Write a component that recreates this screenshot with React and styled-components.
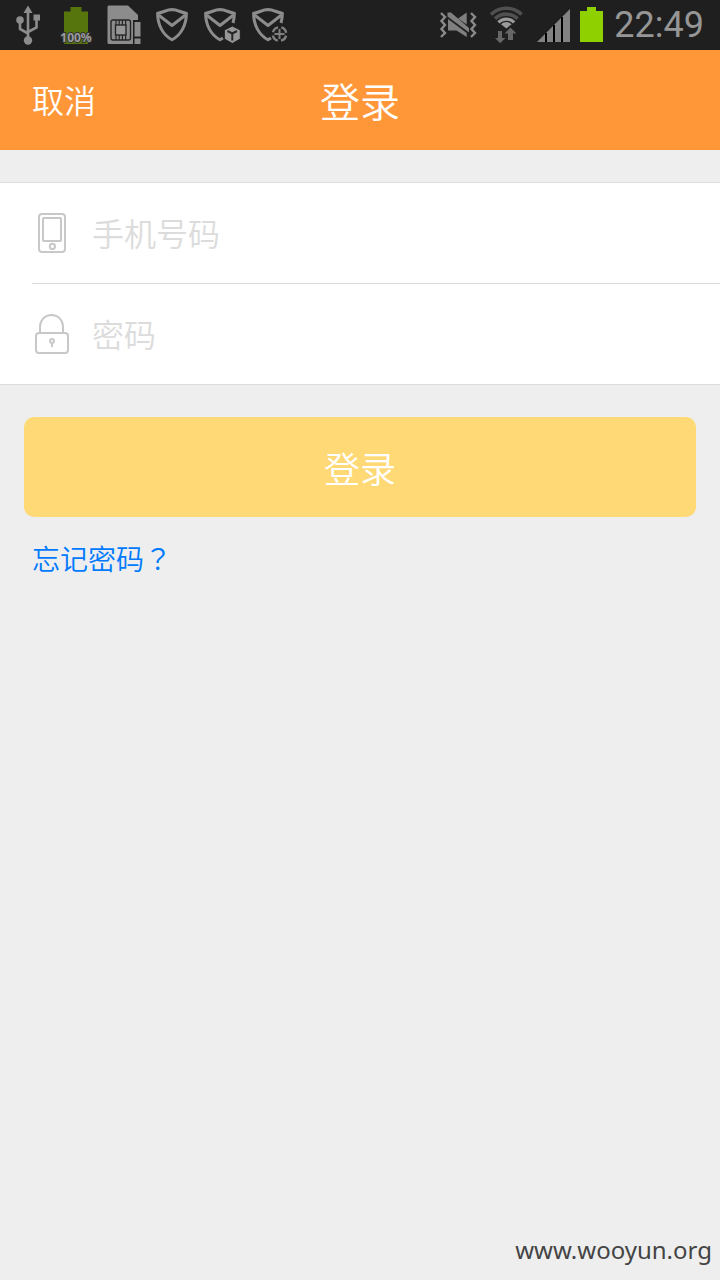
/** 패키지 참조 */
import React, { memo, useCallback, useState } from 'react';
import styled, { createGlobalStyle } from 'styled-components';

/** 상태바 아이콘 */
const ShieldShape = ({ open }) => (
  <g fill="none" stroke="#8c8c8c" strokeLinejoin="round">
    <path
      strokeWidth="3"
      d={open
        ? 'M27 38L24 39.8C15 35 9.6 25 9.6 13.2C15 12.6 18 9.8 24 9.6C30 9.8 33 12.6 38.4 13.2C38.3 17 37.8 20 37 23'
        : 'M24 39.8C15 35 9.6 25 9.6 13.2C15 12.6 18 9.8 24 9.6C30 9.8 33 12.6 38.4 13.2C38.4 25 33 35 24 39.8Z'}
    />
    <path strokeWidth="3" d="M10.5 15L24 25.5L37.5 15" />
  </g>
);

const UsbIcon = () => (
  <StatusIcon viewBox="0 0 48 50" aria-hidden="true">
    <g fill="#8c8c8c">
      <path d="M24 5.5L28.5 13H19.5Z" />
      <circle cx="16" cy="20" r="3.8" />
      <rect x="29.5" y="14.5" width="6.5" height="6" />
      <circle cx="24" cy="40.5" r="4.2" />
    </g>
    <path d="M24 12V38M16 22V29L24 33.5M32.5 20V27.5L24 32" fill="none" stroke="#8c8c8c" strokeWidth="2.6" />
  </StatusIcon>
);

const ChargeIcon = () => (
  <StatusIcon viewBox="0 0 48 50" aria-hidden="true">
    <path d="M12 11.5H18.5V7H29.5V11.5H36V44H12Z" fill="#56760d" />
    <text
      x="24" y="42" textAnchor="middle" fill="#9c9c9c" stroke="#333" strokeWidth="2" paintOrder="stroke"
      fontFamily="'Noto Sans', sans-serif" fontSize="12" fontWeight="700"
    >
      100%
    </text>
  </StatusIcon>
);

const SimIcon = () => (
  <StatusIcon viewBox="0 0 48 50" aria-hidden="true">
    <path d="M9 5.5H28L38 15V44H9Q7.5 44 7.5 42.5V7Q7.5 5.5 9 5.5Z" fill="#8c8c8c" />
    <rect x="11" y="20" width="19.5" height="20" rx="2" fill="none" stroke="#262626" strokeWidth="1.4" />
    <path d="M16 20V25M19.2 20V25M22.4 20V25M25.6 20V25M16 35V40M19.2 35V40M22.4 35V40M25.6 35V40" stroke="#262626" strokeWidth="1.2" />
    <rect x="15.5" y="25" width="10.5" height="10" fill="#969696" stroke="#262626" strokeWidth="1.4" />
    <path d="M33 20H42V46H33Z" fill="#1f1f1f" />
    <path d="M34.5 22H40.5V36.5H34.5ZM34.5 38.5H40.5V44H34.5Z" fill="#8c8c8c" />
  </StatusIcon>
);

const ShieldIcon = () => (
  <StatusIcon viewBox="0 0 48 50" aria-hidden="true">
    <ShieldShape />
  </StatusIcon>
);

const ShieldBoxIcon = () => (
  <StatusIcon viewBox="0 0 48 50" aria-hidden="true">
    <ShieldShape open />
    <path d="M36.3 26L44.3 30V39L36.3 43.5L28.3 39V30Z" fill="#969696" stroke="#1f1f1f" strokeWidth="1" />
    <path d="M31.5 31L36.3 33.5L41 31M36.3 33.5V40.5" fill="none" stroke="#262626" strokeWidth="2" />
  </StatusIcon>
);

const ShieldTargetIcon = () => (
  <StatusIcon viewBox="0 0 48 50" aria-hidden="true">
    <ShieldShape open />
    <circle cx="35.5" cy="34" r="9" fill="#1f1f1f" />
    <g fill="none" stroke="#808080" strokeWidth="2.4">
      <circle cx="35.5" cy="34" r="6.8" strokeDasharray="7.4 3.28" strokeDashoffset="-1.64" />
      <path d="M35.5 29V39M30.5 34H40.5" strokeWidth="2" />
    </g>
  </StatusIcon>
);

const MuteIcon = () => (
  <StatusIcon viewBox="0 0 48 50" aria-hidden="true">
    <g fill="none" stroke="#8a8a8a" strokeWidth="2.4">
      <path d="M7 13L11 17L7.5 21L11 25L7.5 29L11 33L7 37" />
      <path d="M37 13L41 17L37.5 21L41 25L37.5 29L41 33L37 37" />
    </g>
    <g fill="#808080">
      <path d="M24 18.5L32.7 12.5V24.5Z" />
      <path d="M13.5 12.5H17L35 28V32.5L13.5 16.5Z" />
      <path d="M14 19L32.7 33V37L22.5 30.5H14Z" />
    </g>
  </StatusIcon>
);

const WifiIcon = () => (
  <StatusIcon viewBox="0 0 48 50" aria-hidden="true">
    <g fill="none" strokeWidth="3.6">
      <path d="M9 14.6A21.5 21.5 0 0 1 39.6 14.6" stroke="#505050" />
      <path d="M13 18.8A16 16 0 0 1 35.6 18.8" stroke="#505050" />
      <path d="M16.4 22.4A11 11 0 0 1 32.2 22.4" stroke="#9a9a9a" strokeWidth="3.2" />
    </g>
    <path d="M24.3 28.5L19 24.2A7.4 7.4 0 0 1 29.6 24.2Z" fill="#9a9a9a" />
    <path d="M16 31H20V38H23.5L18.2 43.2L13 38H16ZM26 40V33.5H22.5L28.5 27.5L34.5 33.5H31V40Z" fill="#666" />
  </StatusIcon>
);

const SignalIcon = () => (
  <StatusIcon viewBox="0 0 48 50" aria-hidden="true">
    <path d="M7 42L40 9V42Z" fill="#828282" />
    <path d="M16 33V42M24 25V42M32 17V42" stroke="#000" strokeWidth="2" />
  </StatusIcon>
);

/** 입력창 아이콘 */
const PhoneIcon = () => (
  <FieldIcon viewBox="0 0 40 42" aria-hidden="true">
    <rect x="7" y="2" width="26" height="38" rx="3" />
    <rect x="11" y="6" width="18" height="23" rx="1" />
    <circle cx="20.4" cy="34.4" r="2.6" />
  </FieldIcon>
);

const LockIcon = () => (
  <FieldIcon viewBox="0 0 40 42" aria-hidden="true">
    <path d="M8 20V13.5A11.5 11.5 0 0 1 31 13.5V20" />
    <rect x="4" y="20" width="32" height="20" rx="3" />
    <circle cx="20" cy="28" r="2" />
    <path d="M20 30V34" />
  </FieldIcon>
);

const StatusBar = memo(() => (
  <StatusContainer>
    <StatusGroup>
      <UsbIcon />
      <ChargeIcon />
      <SimIcon />
      <ShieldIcon />
      <ShieldBoxIcon />
      <ShieldTargetIcon />
    </StatusGroup>
    <StatusGroup>
      <MuteIcon />
      <WifiIcon />
      <SignalIcon />
      <BatteryIcon viewBox="0 0 26 50" aria-hidden="true">
        <path d="M2 11H9V7H18V11H25V42H2Z" fill="#8fd000" />
      </BatteryIcon>
      <Clock>22:49</Clock>
    </StatusGroup>
  </StatusContainer>
));

const App = () => {
  // 입력값 상태값
  const [form, setForm] = useState({ phone: '', password: '' });

  const onChange = useCallback(e => {
    const { name, value } = e.target;

    setForm(prev => ({ ...prev, [name]: value }));
  }, []);

  const onSubmit = useCallback(e => {
    e.preventDefault();
  }, []);

  return (
    <>
      <GlobalStyle />
      <Page>
        <StatusBar />
        <Header>
          <CancelBtn type="button">取消</CancelBtn>
          <Title>登录</Title>
        </Header>

        <form onSubmit={onSubmit}>
          <FieldList>
            <Field>
              <PhoneIcon />
              <FieldInput
                type="tel" name="phone" placeholder="手机号码" aria-label="手机号码"
                value={form.phone} onChange={onChange}
              />
            </Field>
            <Field $divider>
              <LockIcon />
              <FieldInput
                type="password" name="password" placeholder="密码" aria-label="密码"
                value={form.password} onChange={onChange}
              />
            </Field>
          </FieldList>
          <SubmitBtn type="submit">登录</SubmitBtn>
        </form>

        <ForgotLink href="#forgot">忘记密码<WideMark>？</WideMark></ForgotLink>
        <SiteMark>www.wooyun.org</SiteMark>
      </Page>
    </>
  );
};

export default App;

const GlobalStyle = createGlobalStyle`
  * { box-sizing: border-box; }

  body {
    margin: 0;
    background: #eee;
    font-family: Roboto, 'Noto Sans CJK SC', sans-serif;
    font-weight: 350;
  }

  button, input {
    font-family: inherit;
    font-weight: inherit;
  }
`;

const Page = styled.div`
  display: flex;
  flex-direction: column;
  min-height: 100vh;
`;

const StatusContainer = styled.div`
  display: flex;
  justify-content: space-between;
  height: 50px;
  padding: 0 16px 0 4px;
  background: #1f1f1f;
`;

const StatusGroup = styled.div`
  display: flex;
  align-items: center;
`;

const StatusIcon = styled.svg`
  display: block;
  width: 48px;
  height: 50px;
`;

const BatteryIcon = styled(StatusIcon)`
  width: 26px;
`;

const Clock = styled.span`
  margin-left: 10px;
  color: #969696;
  font-size: 36px;
  font-weight: 400;
  line-height: 50px;
`;

const Header = styled.header`
  display: grid;
  grid-template-columns: 1fr auto 1fr;
  align-items: center;
  height: 100px;
  padding: 4px 32px 0;
  background: #ff9739;
  color: #fff;
`;

const CancelBtn = styled.button`
  justify-self: start;
  padding: 0;
  border: 0;
  background: none;
  color: inherit;
  font-size: 32px;
  line-height: 48px;
  cursor: pointer;
`;

const Title = styled.h1`
  margin: 0;
  padding-top: 4px;
  font-size: 40px;
  font-weight: inherit;
  line-height: 60px;
`;

const FieldList = styled.div`
  margin-top: 32px;
  padding-left: 32px;
  border: solid #dcdcdc;
  border-width: 1px 0;
  background: #fff;
`;

const Field = styled.label`
  display: flex;
  align-items: center;
  gap: 20px;
  border-top: ${({ $divider }) => ($divider ? '1px solid #dcdcdc' : '0')};
`;

const FieldIcon = styled.svg`
  flex: none;
  width: 40px;
  height: 42px;
  fill: none;
  stroke: #c8c8c8;
  stroke-width: 2;
`;

const FieldInput = styled.input`
  flex: 1;
  min-width: 0;
  height: 100px;
  padding: 4px 0 0;
  border: 0;
  outline: 0;
  background: none;
  color: #333;
  font-size: 32px;

  &::placeholder { color: #dcdcdc; opacity: 1; }
`;

const SubmitBtn = styled.button`
  display: block;
  width: calc(100% - 48px);
  height: 100px;
  margin: 32px 24px 0;
  padding: 0;
  border: 0;
  border-radius: 10px;
  background: #ffd975;
  color: #fff;
  font-size: 36px;
  cursor: pointer;
`;

const ForgotLink = styled.a`
  align-self: flex-start;
  margin: 20px 32px 0;
  color: #007aff;
  font-size: 28px;
  line-height: 42px;
  text-decoration: none;
`;

const WideMark = styled.span`
  font-family: 'Noto Sans CJK TC', sans-serif;
`;

const SiteMark = styled.footer`
  margin-top: auto;
  padding: 0 8px 12px;
  color: #444;
  font-family: 'Noto Sans', sans-serif;
  font-size: 24px;
  font-weight: 400;
  line-height: 36px;
  text-align: right;
`;
